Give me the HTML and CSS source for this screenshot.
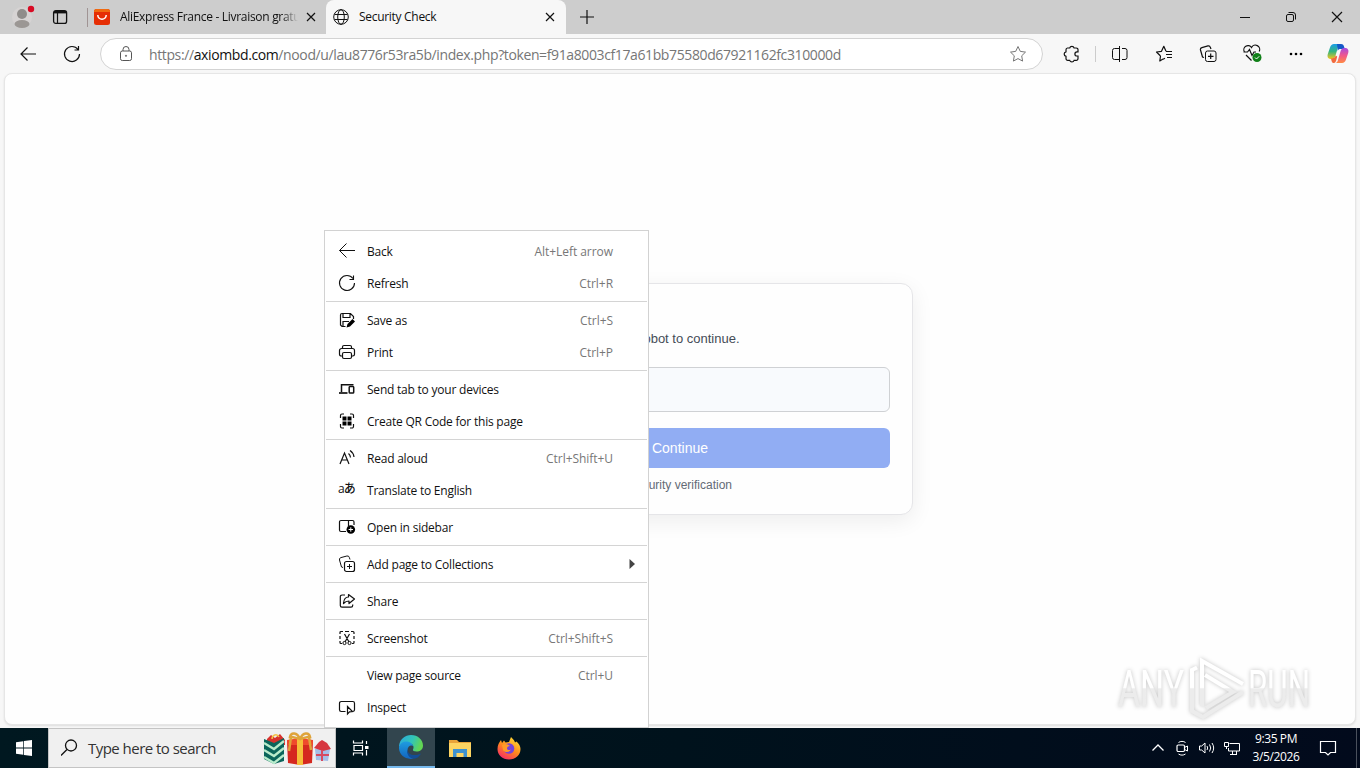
FILE: index.html
```html
<!DOCTYPE html>
<html lang="en">
<head>
    <meta charset="UTF-8">
    <title>Security Check</title>
    <link rel="stylesheet" href="styles.css">
</head>
<body>
    <!-- Tab strip -->
    <div class="tabstrip">
        <div class="profile">
            <svg width="24" height="24" viewBox="0 0 24 24"><circle cx="11" cy="12" r="10" fill="#d6d3d3"/><circle cx="11" cy="9" r="5" fill="#8f8c8a"/><ellipse cx="11" cy="19" rx="7.5" ry="4" fill="#9b9794"/><circle cx="20" cy="4" r="3.2" fill="#d80b24"/></svg>
        </div>
        <div class="workspaces">
            <svg class="ico" width="16" height="16"><rect x="1.6" y="1.6" width="13" height="12.8" rx="2.2" stroke-width="1.3"/><path d="M2 3.2h12" stroke-width="2.4"/><path d="M5.5 4v10" stroke-width="1.2"/></svg>
        </div>
        <div class="tab">
            <svg width="16" height="16"><rect width="16" height="16" rx="2.5" fill="#e62e04"/><path d="M0 3V2.5A2.5 2.5 0 0 1 2.5 0h11A2.5 2.5 0 0 1 16 2.5V3z" fill="#f06a10"/><path d="M3.8 6a4.2 4.2 0 0 0 8.400 0" fill="none" stroke="#fff" stroke-width="1.5"/></svg>
            <span class="tab-title fade">AliExpress France - Livraison gratu</span>
            <svg class="ico" width="10" height="10"><path d="M1 1l8 8M9 1l-8 8" stroke-width="1.2"/></svg>
        </div>
        <div class="tab active">
            <svg class="ico globe" width="16" height="16"><circle cx="8" cy="8" r="7.3"/><ellipse cx="8" cy="8" rx="3.3" ry="7.3"/><path d="M1.5 5.500h13M1.500 10.500h13"/></svg>
            <span class="tab-title">Security Check</span>
            <svg class="ico" width="10" height="10"><path d="M1 1l8 8M9 1l-8 8" stroke-width="1.2"/></svg>
        </div>
        <div class="newtab"><svg class="ico" width="14" height="14"><path d="M7 0v14M0 7h14" stroke-width="1.2"/></svg></div>
        <div class="winbtn"><svg class="ico" width="12" height="12"><path d="M1 6.500h10"/></svg></div>
        <div class="winbtn"><svg class="ico" width="12" height="12"><rect x="1.500" y="3.500" width="7" height="7" rx="1.500"/><path d="M3.500 1.500h4.500a2.500 2.500 0 0 1 2.500 2.500v4.500"/></svg></div>
        <div class="winbtn"><svg class="ico" width="12" height="12"><path d="M1 1l10 10M11 1L1 11" stroke-width="1.2"/></svg></div>
    </div>

    <!-- Address bar row -->
    <div class="toolbar">
        <div class="tool"><svg class="ico" width="16" height="16"><path d="M7.500 1.500L1 8l6.500 6.500M1 8h15" stroke-width="1.2"/></svg></div>
        <div class="tool"><svg class="ico" width="18" height="18"><path d="M15 4.500A7.500 7.500 0 1 0 16.500 9M15.500 1v4H11.500" stroke-width="1.2"/></svg></div>
        <div class="address">
            <svg class="ico lock" width="14" height="16"><rect x="1.500" y="5" width="11" height="9.500" rx="1.800"/><path d="M4 5V3.500a3 3 0 0 1 6 0V5"/><circle cx="7" cy="9.800" r=".6"/></svg>
            <span class="url">https://<b>axiombd.com</b>/nood/u/lau8776r53ra5b/index.php?token=f91a8003cf17a61bb75580d67921162fc310000d</span>
            <svg class="ico star" width="18" height="18" viewBox="0 0 18 18"><path d="M9 1.500l2.300 4.900 5.200.7-3.800 3.700.9 5.300L9 13.600l-4.600 2.500.9-5.300L1.500 7.100l5.200-.7z" stroke-linejoin="round"/></svg>
        </div>
        <div class="tool"><svg class="ico" width="18" height="18"><path d="M4.500 3h2.200a2.300 2.300 0 0 1 4.400 0h2.200a1.700 1.700 0 0 1 1.700 1.700v2.100h-1a2.100 2.100 0 0 0 0 4.200h1v2.600a1.700 1.700 0 0 1-1.700 1.700h-2.200a2.300 2.300 0 0 1-4.400 0H4.700A1.700 1.700 0 0 1 3 13.600v-2.300a2.300 2.300 0 0 1 0-4.500V4.700A1.700 1.700 0 0 1 4.500 3z" stroke-width="1.2"/></svg></div>
        <div class="tool-sep"></div>
        <div class="tool"><svg class="ico" width="18" height="18"><path d="M6.500 3.500h-3A2 2 0 0 0 1.500 5.500v7a2 2 0 0 0 2 2h3M11.500 3.500h3a2 2 0 0 1 2 2v7a2 2 0 0 1-2 2h-3M6.500 3.500v11M11.500 3.500v11" stroke="none"/><path d="M8.500 3.500h-5a2 2 0 0 0-2 2v7a2 2 0 0 0 2 2h5M11 3.500h3a2 2 0 0 1 2 2v7a2 2 0 0 1-2 2h-3M8.500 1v16"/></svg></div>
        <div class="tool"><svg class="ico" width="18" height="18"><path d="M5.500 11l-.7 5 3.200-2M5.500 11L1.500 7l5-.7 2.300-5 2.200 5M8 14.200l2-1M11 6.500h6M11 9.500h6M12 12.500h5" stroke-width="1.2" stroke-linejoin="round"/></svg></div>
        <div class="tool"><svg class="ico" width="18" height="18"><rect x="6.500" y="6" width="10.500" height="10.500" rx="2"/><path d="M11.700 8.500v5.500M9 11.300h5.500M5 12.500L3.500 12 1.500 5a2 2 0 0 1 1.400-2.400l6-1.700a2 2 0 0 1 2.400 1.400L12 4" stroke-width="1.2"/></svg></div>
        <div class="tool"><svg class="ico" width="20" height="20"><path d="M9.500 16.500L4 11M2.500 8a4 4 0 0 1 7-4.500 4 4 0 0 1 7.700 4M1.500 8h4l2-2.500 2.500 6L12 8h2" stroke-width="1.2"/><circle cx="15" cy="13.500" r="4.500" fill="#108018" stroke="none"/><path d="M13 13.500l1.500 1.500 2.700-2.700" stroke="#fff"/></svg></div>
        <div class="tool"><svg width="14" height="4"><circle cx="2" cy="2" r="1.300"/><circle cx="7" cy="2" r="1.300"/><circle cx="12" cy="2" r="1.300"/></svg></div>
        <div class="tool copilot">
            <svg width="22" height="21" viewBox="0 0 22 21">
                <defs>
                    <linearGradient id="cpA" x1="0" y1="0" x2="0" y2="1"><stop offset="0" stop-color="#1b9de8"/><stop offset=".5" stop-color="#35b67e"/><stop offset="1" stop-color="#f5c51b"/></linearGradient>
                    <linearGradient id="cpB" x1="0" y1="0" x2="0" y2="1"><stop offset="0" stop-color="#a64be0"/><stop offset=".5" stop-color="#f0588c"/><stop offset="1" stop-color="#ff8a42"/></linearGradient>
                </defs>
                <path d="M7 1h7c-2 0-2.600 1.500-3.300 4l-2 7C8 14.500 7 16 4.500 16 1 16 0 14 .8 11L3 4.500C3.700 2.200 5 1 7 1z" fill="url(#cpA)"/>
                <path d="M10 1h4c2 0 2.700 1 3.200 3l.6 2h-4c-2 0-2.600.5-3 2z" fill="#1458c8"/>
                <path d="M15 20H8c2 0 2.600-1.500 3.300-4l2-7C14 6.500 15 5 17.500 5c3.500 0 4.500 2 3.700 5L19 16.500c-.7 2.300-2 3.500-4 3.500z" fill="url(#cpB)"/>
                <path d="M4 15.500c2.500 0 4-.8 4.700-3l1.500 1-1 4C8.500 19.500 7.500 20 6.500 20 5 20 4.500 18 4 15.500z" fill="#f26a3d"/>
            </svg>
        </div>
    </div>

    <!-- Page -->
    <div class="viewport">
        <div class="card">
            <p class="prompt">Please confirm you are not a robot to continue.</p>
            <div class="field"></div>
            <div class="continue">Continue</div>
            <p class="note">Security verification</p>
        </div>
        <svg class="watermark" width="204" height="72" viewBox="0 0 204 72">
            <defs>
                <linearGradient id="wm" x1="0" y1="0" x2="0" y2="72" gradientUnits="userSpaceOnUse"><stop offset=".52" stop-color="#fff"/><stop offset=".54" stop-color="#ececec"/></linearGradient>
            </defs>
            <text x="5" y="57" textLength="66" lengthAdjust="spacingAndGlyphs">ANY</text>
            <text x="135" y="57" textLength="62" lengthAdjust="spacingAndGlyphs">RUN</text>
            <path d="M89 56V11l41 23M84 17.500l-5 2.500v41l11 6 40-25M92 25l28 17-27 16"/>
        </svg>
    </div>

    <!-- Context menu -->
    <div class="menu">
        <div class="item"><svg class="ico" width="18" height="18"><path d="M8.500 1.500L1.500 8.500l7 7M1.500 8.500H17"/></svg><span>Back</span><kbd>Alt+Left arrow</kbd></div>
        <div class="item"><svg class="ico" width="18" height="18"><path d="M15 4.500A7.500 7.500 0 1 0 16.500 9M15.500 1.500v4H11.500" stroke-width="1.100"/></svg><span>Refresh</span><kbd>Ctrl+R</kbd></div>
        <div class="sep"></div>
        <div class="item"><svg class="ico" width="18" height="18"><path d="M7.500 15.500H4L2.500 14V4A1.500 1.500 0 0 1 4 2.500h8.500l3 3V8M5 2.500v4h7v-4M5 15.500v-5h6" stroke-width="1.200"/><path d="M8.500 16.500l1-3.500 5-5 2.500 2.500-5 5z" fill="#000" stroke="none"/></svg><span>Save as</span><kbd>Ctrl+S</kbd></div>
        <div class="item"><svg class="ico" width="18" height="18"><path d="M4.500 5V4A1.500 1.500 0 0 1 6 2.500h6A1.500 1.500 0 0 1 13.500 4v1M4.500 13H3.200a1.700 1.700 0 0 1-1.700-1.700V7.500a2 2 0 0 1 2-2h11a2 2 0 0 1 2 2v3.800a1.700 1.700 0 0 1-1.700 1.700h-1.300" stroke-width="1.200"/><rect x="4.500" y="9.500" width="9" height="6" rx="1.500" stroke-width="1.200"/></svg><span>Print</span><kbd>Ctrl+P</kbd></div>
        <div class="sep"></div>
        <div class="item"><svg class="ico" width="18" height="18"><path d="M3.500 12V4.700h12" stroke-width="1.500"/><path d="M1 13h8.500" stroke-width="1.700"/><rect x="11.200" y="6.500" width="4.500" height="6.500" rx=".8" stroke-width="1.500"/></svg><span>Send tab to your devices</span></div>
        <div class="item"><svg class="ico" width="18" height="18"><path d="M2.500 6V3.500a1.500 1.500 0 0 1 1.500-1.500H6M12 2h2a1.500 1.500 0 0 1 1.500 1.500V6M2.500 12v2.500A1.500 1.500 0 0 0 4 16h2M12 16h2a1.500 1.500 0 0 0 1.500-1.500V12" stroke-width="1.200"/><path d="M4.500 4.500h4v4h-4zM9.500 4.500h4v4h-4zM4.500 9.500h4v4h-4zM9.500 9.500h4v4h-4z" fill="#000" stroke="none"/></svg><span>Create QR Code for this page</span></div>
        <div class="sep"></div>
        <div class="item"><svg class="ico" width="18" height="18"><path d="M2 15L6.500 4 11 15M3.500 11h6M10.500 4.500a6 6 0 0 1 2 4M12 1.500a9 9 0 0 1 4 6.500" stroke-width="1.200"/></svg><span>Read aloud</span><kbd>Ctrl+Shift+U</kbd></div>
        <div class="item"><i class="translate">aあ</i><span>Translate to English</span></div>
        <div class="sep"></div>
        <div class="item"><svg class="ico" width="18" height="18"><path d="M8 13.500H3A1.500 1.500 0 0 1 1.500 12V4A1.500 1.500 0 0 1 3 2.500h11.500A1.500 1.500 0 0 1 16 4v3M10.500 3v5" stroke-width="1.200"/><circle cx="12.800" cy="11.500" r="4.300" fill="#000" stroke="none"/><path d="M12.800 9.300v4.400M10.600 11.500H15" stroke="#fff"/></svg><span>Open in sidebar</span></div>
        <div class="sep"></div>
        <div class="item"><svg class="ico" width="18" height="18"><rect x="6.500" y="6.500" width="10" height="10" rx="2" stroke-width="1.200"/><path d="M11.500 9v5M9 11.500h5M5 12.500L3.500 12 1.500 5a2 2 0 0 1 1.400-2.400l6-1.600a2 2 0 0 1 2.400 1.400L12 4.500"/></svg><span>Add page to Collections</span><svg class="arrow" width="6" height="10"><path d="M.5 0l5.500 5-5.500 5z"/></svg></div>
        <div class="sep"></div>
        <div class="item"><svg class="ico" width="18" height="18"><path d="M7 3H4A1.700 1.700 0 0 0 2.300 4.700V13.500A1.700 1.700 0 0 0 4 15.200h9a1.700 1.700 0 0 0 1.700-1.700v-1M10.500 2.500l6 4.500-5.500 4.500V9c-2.500 0-4 .8-5.500 2.500C5.800 7.500 7.500 5 10.500 5z" stroke-width="1.200" stroke-linejoin="round"/></svg><span>Share</span></div>
        <div class="sep"></div>
        <div class="item"><svg class="ico" width="18" height="18"><path d="M2 5V3.500A1 1 0 0 1 3 2.500h2M7 2.500h4M13 2.500h2a1 1 0 0 1 1 1V5M2 7v3M16 7v3M2 12v1.500a1 1 0 0 0 1 1h1M16 12v1.500a1 1 0 0 1-1 1h-1M6.500 5L11 13M11.500 5L7 13" stroke-width="1.200"/><circle cx="6.500" cy="14" r="1.600"/><circle cx="11.500" cy="14" r="1.600"/></svg><span>Screenshot</span><kbd>Ctrl+Shift+S</kbd></div>
        <div class="sep"></div>
        <div class="item"><svg width="18" height="18"></svg><span>View page source</span><kbd>Ctrl+U</kbd></div>
        <div class="item"><svg class="ico" width="18" height="18"><path d="M7.500 13.500H3.200a1.700 1.700 0 0 1-1.700-1.700V5.200a1.700 1.700 0 0 1 1.700-1.700h11.600a1.700 1.700 0 0 1 1.700 1.700v6.600a1.700 1.700 0 0 1-1.500 1.700M9.500 8.500v7.500l2-2.200 3-.3z" stroke-width="1.200"/></svg><span>Inspect</span></div>
    </div>

    <!-- Taskbar -->
    <div class="taskbar">
        <div class="start"><svg width="16" height="16"><path d="M0 2.300L7.300 1.200v6.400H0zM8 1.100L16 0v7.600H8zM0 8.400h7.300v6.400L0 13.700zM8 8.400h8V16l-8-1.100z" fill="#fff"/></svg></div>
        <div class="search">
            <svg class="ico" width="18" height="18"><circle cx="10" cy="6.500" r="5.500" stroke-width="1.300"/><path d="M6 10.500l-6 6" stroke-width="1.300"/></svg>
            <span>Type here to search</span>
            <svg class="gifts" width="68" height="36" viewBox="0 0 68 36">
                <path d="M4 9l4-4 4 3 5-4 5 6v5H4z" fill="#d6322d"/>
                <path d="M1 9l10 4 10-5v23l-10 3-10-5z" fill="#0b655b"/>
                <path d="M1 13l10 6 10-8M1 20l10 6 10-8M1 27l10 6 10-8" fill="none" stroke="#b8ebcb" stroke-width="2.300"/>
                <path d="M9 9c0-4 5-6 7-2" fill="none" stroke="#f4c247" stroke-width="1.500"/>
                <path d="M24 11h26l-1 22-12 2-12-2z" fill="#d5281f"/>
                <path d="M24 10l13-2 13 2v5H24z" fill="#ef4a2c"/>
                <path d="M34 9h6v26h-6z" fill="#f6bd3a"/>
                <path d="M37 9c-3-7-9-7-10-2 3 0 6 1 10 2 3-7 9-7 10-2-3 0-6 1-10 2M28 7l-2 14M46 7l2 13" fill="none" stroke="#dfa43a" stroke-width="2.500"/>
                <path d="M52 19h15l-2 12-12-1z" fill="#a4bfe8"/>
                <path d="M51 18l5-6 3-2 5 3 4 6-8 2z" fill="#d63741"/>
                <path d="M59 20v11M53 25h13" stroke="#d64a61" stroke-width="2"/>
            </svg>
        </div>
        <div class="task"><svg class="ico light" width="18" height="18"><path d="M1.500 1.500V4h9V1.500M1.500 16.500V14h9v2.500M2 6.500h8.500v5H2zM14.500 2v3M14.500 11v5.500" stroke-width="1.200"/><path d="M13 7h3.500v3H13z" fill="#fff" stroke="none"/></svg></div>
        <div class="task running">
            <svg width="24" height="24" viewBox="0 0 24 24">
                <defs>
                    <linearGradient id="edA" x1="0" y1="0" x2="1" y2=".3"><stop offset="0" stop-color="#2ba8df"/><stop offset=".6" stop-color="#32c5b7"/><stop offset="1" stop-color="#62d554"/></linearGradient>
                    <linearGradient id="edB" x1="0" y1="0" x2="0" y2="1"><stop offset="0" stop-color="#1f9de0"/><stop offset="1" stop-color="#1264bf"/></linearGradient>
                </defs>
                <path d="M0 11C.8 4 6 0 12 0c7 0 12 5 12 10.500 0 4-3 6-6.500 6-2.500 0-4-1-3.500-2 1.500-2.500 0-6-4-6.500C5.500 7.500 2 9 0 12z" fill="url(#edA)"/>
                <path d="M0 12c1.500-4.500 5-6 8.500-5.500C12 7 14 9.500 14 11c-2-1.500-5.500 0-5.500 4.500 0 4 3 7.500 6.500 8C6 25.500-.5 19.500 0 12z" fill="url(#edB)"/>
                <path d="M8.500 14c-.5 5.500 6.500 8 13.500 4.500-1.500 3-4 5-7 5.200-5-.5-8-5-6.500-9.700z" fill="#134d95"/>
            </svg>
        </div>
        <div class="task"><svg width="22" height="20"><path d="M0 2h8l2 2h12v15H0z" fill="#e8a33a"/><path d="M0 5h22v14H0z" fill="#fcd462"/><path d="M4 11h14v8h-3.500v-4h-7v4H4z" fill="#3d91cf"/></svg></div>
        <div class="task">
            <svg width="24" height="24" viewBox="0 0 24 24">
                <defs><linearGradient id="fx" x1=".8" y1="0" x2=".2" y2="1"><stop offset="0" stop-color="#ffe137"/><stop offset=".5" stop-color="#ff8a1c"/><stop offset="1" stop-color="#f5246c"/></linearGradient></defs>
                <path d="M4 4l1 3 2-2.500 1.500 2L12 6l2-5c2 2 3.500 3.500 4 5.500l1.500-1C22 8 23.500 10 23.500 13c0 6-5 10.500-11.500 10.500S.5 19 .5 13C.5 9 2 6.500 4 4z" fill="url(#fx)"/>
                <circle cx="12" cy="12.500" r="5.300" fill="#7543d9"/>
                <path d="M5 9c3-2 6-1 8 1-2 0-3 1-3 2.500s2 2 4 1c-1.500 3-6 3.500-8 .5z" fill="#ff9b27"/>
            </svg>
        </div>
        <div class="tray">
            <svg class="ico light" width="16" height="16"><path d="M2.500 10.500L8 5l5.500 5.500" stroke-width="1.300"/></svg>
            <svg class="ico light" width="16" height="16"><rect x="3" y="5" width="7.500" height="6.500" rx="1.200" stroke-width="1.200"/><path d="M11 7.200l2.500-1.200v5L11 9.700M4.500 2.500c2-1.500 5-1.500 7 0M4.500 14c2 1.500 5 1.500 7 0"/></svg>
            <svg class="ico light" width="18" height="16"><path d="M1.500 6v4h2.200L7 13V3L3.700 6zM9 6a3.500 3.500 0 0 1 0 4M11.500 4.500a6 6 0 0 1 0 7M14 3a9 9 0 0 1 0 10"/></svg>
            <svg class="ico light" width="16" height="16"><path d="M5.500 3.500h10v7.500h-11V8M8.500 11v3M12.500 11v3M6 14.500h7M.5 2.500h4v4h-4zM2.500 6.500V9"/></svg>
        </div>
        <div class="clock"><span>9:35 PM</span><span>3/5/2026</span></div>
        <div class="notify"><svg class="ico light" width="18" height="18"><path d="M1.500 2.500h15v11h-5L9 16l-2.500-2.500h-5z" stroke-width="1.200"/></svg></div>
    </div>
</body>
</html>
```

FILE: styles.css
```css
* { box-sizing: border-box; }
body {
    margin: 0;
    width: 1360px;
    height: 768px;
    overflow: hidden;
    display: flex;
    flex-direction: column;
    background: #f7f7f7;
    font-family: "Open Sans", "Noto Sans", "Noto Sans CJK JP", sans-serif;
    font-size: 12px;
    color: #111;
}
svg { display: block; flex: none; }
p { margin: 0; }
.ico { fill: none; stroke: #111; stroke-width: 1; }
.ico.light { stroke: #fff; }

/* tabs */
.tabstrip {
    height: 34px;
    flex: none;
    display: flex;
    background: #cdcdcd;
}
.tabstrip > div { display: flex; align-items: center; }
.profile { width: 44px; padding-left: 11px; }
.workspaces { width: 44px; padding-left: 8px; }
.tab {
    width: 238px;
    padding: 0 10px 0 6px;
    position: relative;
}
.tab:not(.active)::before {
    content: "";
    position: absolute;
    left: -1px;
    top: 8px;
    width: 1px;
    height: 19px;
    background: #a09494;
}
.tab-title {
    flex: 1;
    margin: -1px 4px 0 10px;
    white-space: nowrap;
    letter-spacing: -0.3px;
}
.fade { mask-image: linear-gradient(to right, #000 162px, transparent 178px); }
.tab.active {
    width: 240px;
    padding: 0 11px 0 7px;
    background: #f7f7f7;
    border-radius: 8px 8px 0 0;
}
.newtab { flex: 1; padding-left: 14px; }
.winbtn { width: 46px; justify-content: center; }

/* address row */
.toolbar {
    height: 39px;
    flex: none;
    display: flex;
    align-items: center;
    padding: 0 2px 0 6px;
}
.tool {
    width: 44px;
    display: flex;
    justify-content: center;
}
.tool.copilot { width: 40px; }
.tool-sep { width: 1px; height: 16px; margin: 0 2px 0 1px; background: #ccc; }
.address {
    width: 943px;
    height: 32px;
    margin: 1px 7px 0 6px;
    padding: 0 15px 0 18px;
    display: flex;
    align-items: center;
    background: #fff;
    border: 1px solid #d3d3d3;
    border-radius: 16px;
}
.lock { stroke: #555; }
.star { stroke: #777; }
.url {
    flex: 1;
    margin-left: 16px;
    font-size: 14px;
    letter-spacing: -0.385px;
    color: #767676;
    white-space: nowrap;
}
.url b { font-weight: 400; color: #111; }

/* page */
.viewport {
    height: 652px;
    flex: none;
    margin: 0 4px;
    position: relative;
    display: flex;
    align-items: center;
    justify-content: center;
    background: #fefefe;
    border: 1px solid #e6e6e6;
    border-radius: 8px;
    box-shadow: 0 1px 2px #ddd;
}
.card {
    width: 466px;
    height: 232px;
    padding: 46px 22px 0;
    background: #fefefe;
    border: 1px solid #e5e5e8;
    border-radius: 12px;
    box-shadow: 0 6px 22px rgba(0, 0, 0, 0.07);
    font-family: "Liberation Sans", Arial, sans-serif;
}
.prompt { font-size: 13px; line-height: 18px; color: #454c57; }
.field {
    height: 45px;
    margin: 19px 0 16px;
    background: #f8fafd;
    border: 1px solid #cfd1d4;
    border-radius: 6px;
}
.continue {
    height: 40px;
    line-height: 40px;
    text-align: center;
    font-size: 14px;
    color: #fff;
    background: #91adf3;
    border-radius: 6px;
}
.note { margin-top: 9px; line-height: 16px; text-align: center; color: #646b76; }
.watermark {
    position: absolute;
    right: 38px;
    bottom: 2px;
    overflow: visible;
    filter: drop-shadow(0 0 2px #c4c4c4);
}
.watermark text {
    font-family: Roboto, sans-serif;
    font-size: 52px;
    fill: url(#wm);
}
.watermark path { fill: none; stroke: url(#wm); stroke-width: 4; }

/* context menu */
.menu {
    position: absolute;
    left: 324px;
    top: 230px;
    width: 325px;
    height: 498px;
    padding: 5px 1px 0;
    background: #fff;
    border: 1px solid #d2d2d2;
}
.item {
    height: 32px;
    padding: 0 34px 2px 12px;
    display: flex;
    align-items: center;
    white-space: nowrap;
}
.item span { flex: 1; margin-left: 11px; letter-spacing: -0.22px; }
.item kbd {
    font-family: inherit;
    letter-spacing: -0.05px;
    color: #777;
}
.arrow { margin-right: -22px; fill: #444; }
.sep { height: 1px; margin: 1px 0 3px; background: #d4d4d4; }
.translate {
    width: 18px;
    margin-top: -3px;
    font-style: normal;
    font-size: 12px;
    line-height: 16px;
    letter-spacing: -0.8px;
    font-weight: 500;
}

/* taskbar */
.taskbar {
    height: 40px;
    flex: none;
    margin-top: 3px;
    display: flex;
    background: linear-gradient(to right, #001820, #00121c 50%, #020a1c);
    color: #fff;
}
.taskbar > div { display: flex; align-items: center; }
.start { width: 48px; justify-content: center; }
.search {
    width: 288px;
    padding: 0 4px 0 12px;
    background: #f0f0f0;
    border: 1px solid #c4c4c4;
    color: #333;
    font-size: 15px;
}
.search span { flex: 1; margin-left: 9px; letter-spacing: -0.53px; }
.task { width: 49px; justify-content: center; }
.task.running {
    width: 48px;
    margin-left: 2px;
    background: #32454e;
    border-bottom: 2px solid #76b9ed;
}
.tray { margin-left: auto; gap: 8px; }
.clock {
    width: 72px;
    flex-direction: column;
    justify-content: center;
    line-height: 18px;
    letter-spacing: -0.4px;
}
.notify {
    width: 33px;
    padding-right: 1px;
    margin-right: 15px;
    justify-content: center;
    position: relative;
}
/* show desktop edge */
.notify::after {
    content: "";
    position: absolute;
    right: -12px;
    top: 0;
    width: 1px;
    height: 40px;
    background: #4a505c;
}
```
